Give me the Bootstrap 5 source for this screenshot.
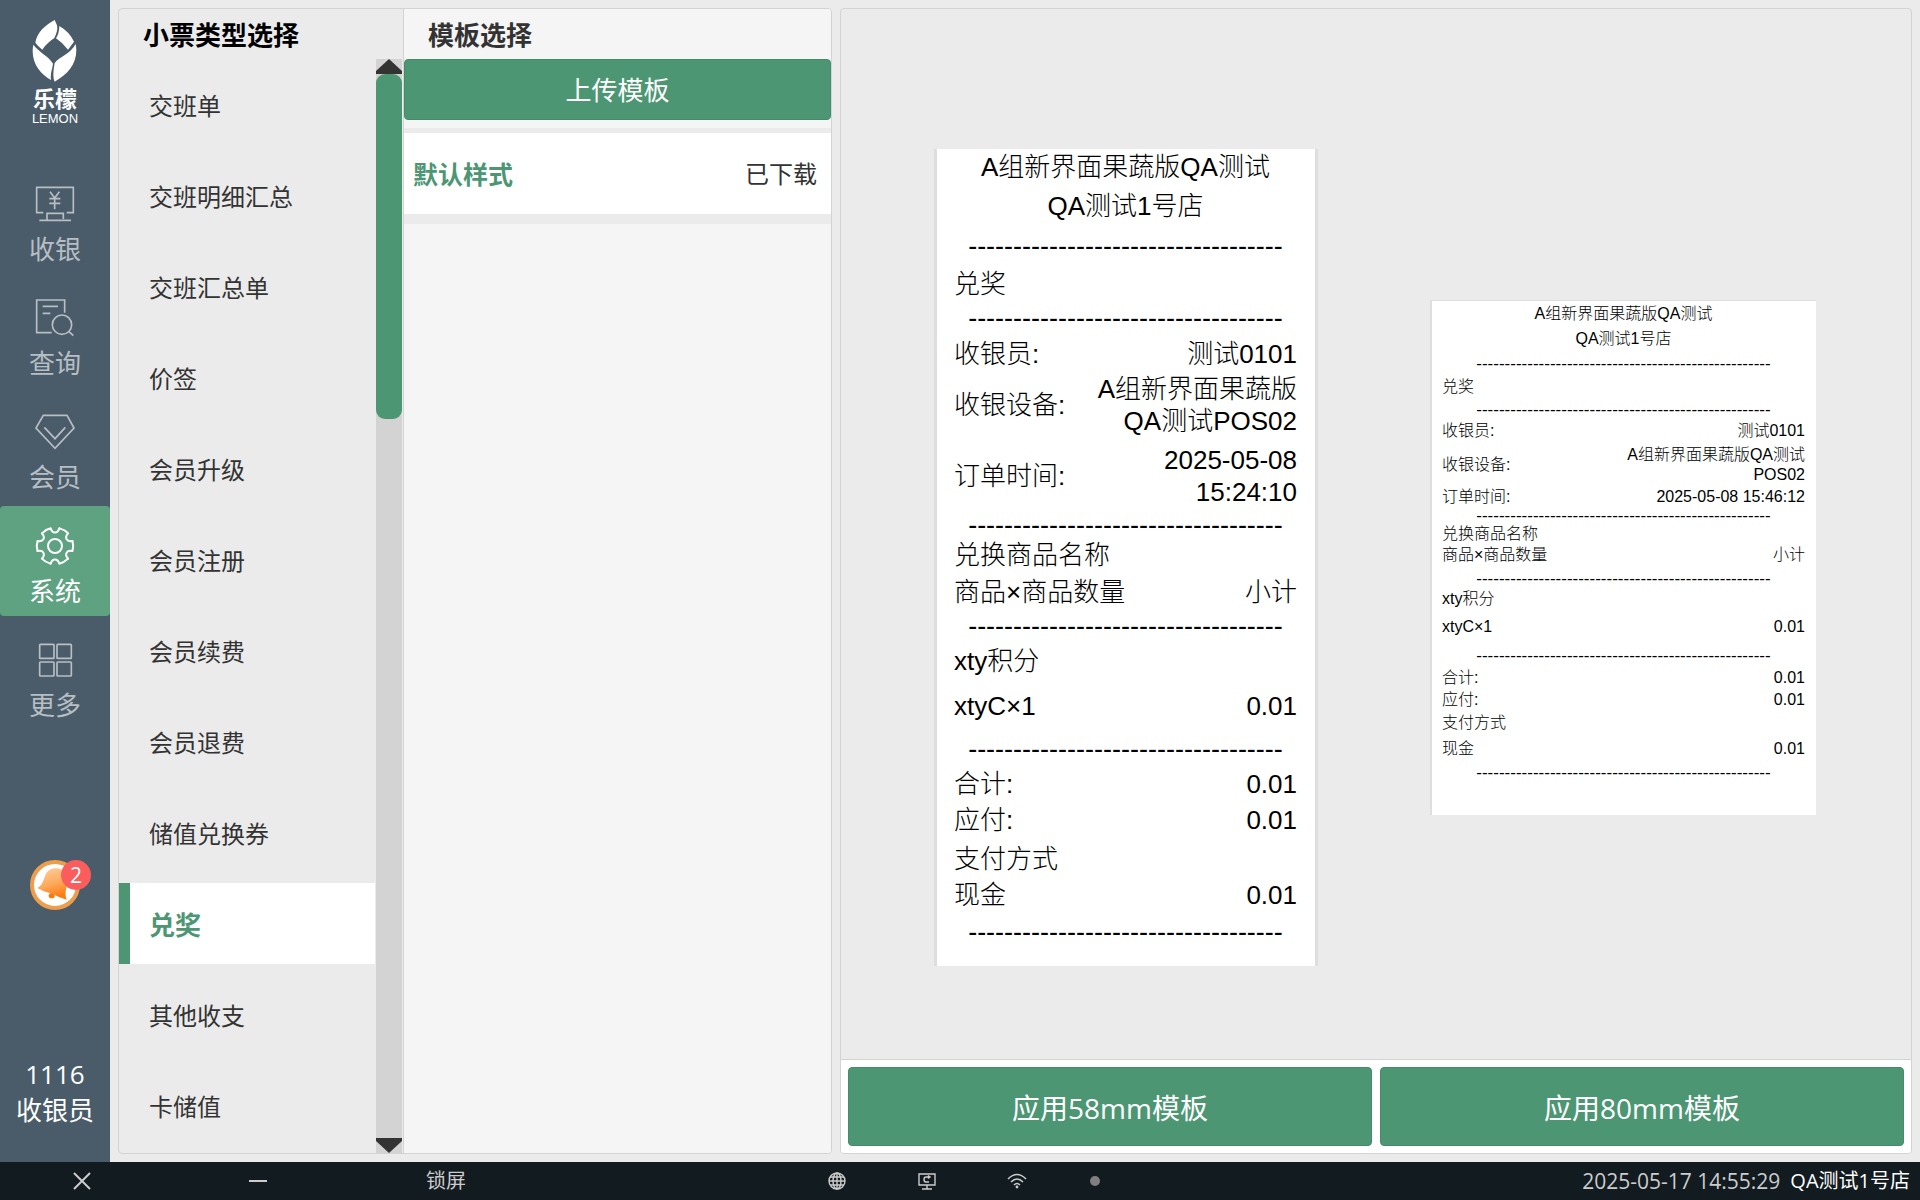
<!DOCTYPE html>
<html lang="zh-CN">
<head>
<meta charset="utf-8">
<meta name="viewport" content="width=device-width, initial-scale=1">
<title>小票模板</title>
<link href="https://cdn.jsdelivr.net/npm/bootstrap@5.3.0/dist/css/bootstrap.min.css" rel="stylesheet">
<style>
:root{--green:#4d9673;--slate:#4a5c69;--line:#d3d3d3;--ink:#333}
body{font-family:"Open Sans","Noto Sans CJK SC",sans-serif;background:#ebebeb;color:var(--ink);font-size:24px;line-height:36px}
button{font-family:inherit}
.side{width:110px;background:var(--slate);color:#fff;font-size:26px;padding:20px 0 34px}
.brand{height:144px}
.brand-cn{font-size:22px;font-weight:700;line-height:24px}
.brand-en{font-family:"Liberation Sans",sans-serif;font-size:13px;line-height:18px}
.side-nav{gap:4px}
.side-link{height:110px;padding-top:21px;gap:8px;color:#b7bec4;border-radius:4px;text-decoration:none}
.side-link.active{background:#5fa281;color:#fff}
.side-link svg{fill:none;stroke:currentColor;stroke-width:5}
.side-link.active svg{stroke-width:6}
.bell{margin-top:130px;width:50px;height:50px}
.bell-count{left:31px;top:0;width:30px;height:30px;border-radius:15px;background:#fb5d5d;font-size:21px;line-height:30px;color:#fff}
.workspace{padding:8px;gap:8px}
.panel{border:1px solid var(--line);border-radius:4px;overflow:hidden}
.picker{width:714px}
.types{width:285px;border-right:1px solid var(--line)}
.panel-title{font-size:26px;font-weight:700;line-height:52px;height:50px;margin:0;padding-left:24px}
.types .panel-title{color:#000}
.type-list{padding-top:5px;gap:10px}
.type-item{height:81px;padding:2px 0 0 30px;border:0;background:none;color:var(--ink);text-align:left;flex-shrink:0}
.type-item.active{background:#fff;border-left:11px solid var(--green);padding-left:19px;color:var(--green);font-weight:700;font-size:26px}
.scroll{width:26px;background:var(--line);margin:0 1px 0 1px}
.scroll button{border:0;background:none;padding:0;height:15px;line-height:0}
.thumb{height:345px;background:var(--green);border-radius:9px}
.templates{background:#f5f5f5}
.btn-green{background:var(--green);color:#fff;border:1px solid #448c69;border-radius:4px;padding:2px 0 0}
.btn-green:hover{background:#448c69;color:#fff}
.btn-upload{height:61px;font-size:26px}
.template-item{margin-top:8px;border:0 solid #ebebeb;border-width:5px 0 10px;background:#fff;height:96px;padding:1px 14px 0 9px}
.template-name{font-size:25px;font-weight:700;color:var(--green)}
.preview{padding:46px 2px 0 0;gap:112px}
.apply{background:#fff;border-top:1px solid var(--line);padding:7px;gap:8px}
.btn-apply{height:79px;font-size:28px}
.receipt{font-family:"Liberation Sans","Noto Sans CJK SC",sans-serif;font-weight:300;color:#000;background:#fff}
.receipt div{flex-shrink:0}
.r58{width:384px;height:817px;font-size:26px;line-height:32px;padding:0 18px 0 17px;border:0 solid #dedede;border-width:0 3px}
.r80{width:386px;height:515px;font-size:16px;line-height:20px;padding:0 11px 0 10px;border:0 solid #dedede;border-width:1px 0 0 2px}
.r58 .dashes{font-size:27px;padding-bottom:4px}
.r80 .dashes{font-size:17px}
.h-10{height:10px}.h-12{height:12px}.h-16{height:16px}.h-18{height:18px}.h-20{height:20px}.h-24{height:24px}.h-26{height:26px}.h-30{height:30px}.h-32{height:32px}.h-36{height:36px}.h-42{height:42px}.h-48{height:48px}.h-52{height:52px}.h-54{height:54px}.h-66{height:66px}.h-76{height:76px}
.status{height:38px;background:#111b20;color:#ccc;font-size:20px;line-height:38px;padding-right:10px}
.status button{border:0;background:none;padding:0;color:inherit;line-height:38px}
.status svg{fill:none;stroke:currentColor;display:block;margin:0 auto}
.w-first{width:164px}.w-wide{width:188px}.w-icon{width:90px}.w-dot{width:66px}
.status-icons{margin-left:252px}
.clock{font-size:21px;margin-right:10px}
</style>
<script src="https://cdn.jsdelivr.net/npm/bootstrap@5.3.0/dist/js/bootstrap.bundle.min.js"></script>
</head>
<body class="vh-100 d-flex flex-column overflow-hidden">
<div class="d-flex flex-grow-1 overflow-hidden">
  <aside class="side d-flex flex-column align-items-center flex-shrink-0">
    <div class="brand d-flex flex-column align-items-center">
      <svg width="46" height="62" viewBox="97 29 138 186" fill="#fff" class="mb-1" aria-hidden="true">
        <path d="M165 29C137 44 112 66 107 97Q115 108 128 118C138 102 152 92 164 83Q176 60 172 45Z"/>
        <path d="M179 47Q209 64 223 94L205 118Q190 98 169 84Q179 68 179 47Z"/>
        <path d="M101 103C118 125 148 139 160 160C158 177 151 190 154 209C119 190 91 151 101 103Z"/>
        <path d="M228 101C238 153 208 190 165 214Q157 199 165 158C179 139 211 132 228 101Z"/>
      </svg>
      <div class="brand-cn">乐檬</div>
      <div class="brand-en">LEMON</div>
    </div>
    <nav class="side-nav d-flex flex-column w-100">
      <a href="#" class="side-link d-flex flex-column align-items-center">
        <svg width="40" height="38" viewBox="105 554 120 114"><path d="M130 637H110V561H220V637H200M118 660H213M141 660V639H190V656M150 574L164 593L178 574M164 593V627M148 595H181M148 609H181"/></svg>收银</a>
      <a href="#" class="side-link d-flex flex-column align-items-center">
        <svg width="40" height="38" viewBox="105 896 120 114"><path d="M155 997H110V899H194V937M128 918H174M128 939H151M206 993L220 1006"/><circle cx="186" cy="973" r="29"/></svg>查询</a>
      <a href="#" class="side-link d-flex flex-column align-items-center">
        <svg width="40" height="38" viewBox="108 38 120 114"><path d="M133 45H204L225 83L168 144L111 83ZM136 81L168 115L199 81"/></svg>会员</a>
      <a href="#" class="side-link active d-flex flex-column align-items-center">
        <svg width="40" height="38" viewBox="-60 -57 120 114" stroke-linecap="round" stroke-linejoin="round">
          <defs><path id="tooth" d="M13 -53C8 -36 -8 -36 -13 -53Q-27 -50 -39 -38"/></defs>
          <use href="#tooth"/><use href="#tooth" transform="rotate(60)"/><use href="#tooth" transform="rotate(120)"/><use href="#tooth" transform="rotate(180)"/><use href="#tooth" transform="rotate(240)"/><use href="#tooth" transform="rotate(300)"/>
          <circle r="21"/></svg>系统</a>
      <a href="#" class="side-link d-flex flex-column align-items-center">
        <svg width="40" height="38" viewBox="106 724 120 114"><rect x="120" y="734" width="43" height="42" rx="2"/><rect x="172" y="734" width="43" height="42" rx="2"/><rect x="120" y="787" width="43" height="42" rx="2"/><rect x="172" y="787" width="43" height="42" rx="2"/></svg>更多</a>
    </nav>
    <div class="bell position-relative">
      <svg class="d-block" width="50" height="50" viewBox="90 180 150 150" aria-hidden="true">
        <defs><linearGradient id="bellFill" x1="0" y1="0" x2=".3" y2="1"><stop offset="0" stop-color="#ffd0a0"/><stop offset=".6" stop-color="#fda95a"/><stop offset="1" stop-color="#fb7d14"/></linearGradient></defs>
        <circle cx="165" cy="255" r="69" fill="#fff" stroke="#ee9d4c" stroke-width="12"/>
        <ellipse cx="155" cy="287" rx="9" ry="8" fill="#f9790c"/>
        <path fill="url(#bellFill)" d="M112 264C126 258 130 242 136 226C142 208 160 202 178 206C198 212 208 230 202 252C197 270 194 284 200 299Q180 294 158 282Q128 274 112 264Z"/>
      </svg>
      <span class="bell-count position-absolute text-center">2</span>
    </div>
    <div class="mt-auto text-center">1116<br>收银员</div>
  </aside>

  <main class="workspace d-flex flex-grow-1">
    <section class="picker panel d-flex flex-shrink-0">
      <div class="types d-flex flex-column flex-shrink-0">
        <h1 class="panel-title">小票类型选择</h1>
        <div class="d-flex flex-grow-1 overflow-hidden">
          <div class="type-list d-flex flex-column flex-grow-1 overflow-hidden">
            <button type="button" class="type-item">交班单</button>
            <button type="button" class="type-item">交班明细汇总</button>
            <button type="button" class="type-item">交班汇总单</button>
            <button type="button" class="type-item">价签</button>
            <button type="button" class="type-item">会员升级</button>
            <button type="button" class="type-item">会员注册</button>
            <button type="button" class="type-item">会员续费</button>
            <button type="button" class="type-item">会员退费</button>
            <button type="button" class="type-item">储值兑换券</button>
            <button type="button" class="type-item active">兑奖</button>
            <button type="button" class="type-item">其他收支</button>
            <button type="button" class="type-item">卡储值</button>
          </div>
          <div class="scroll d-flex flex-column flex-shrink-0">
            <button type="button" aria-label="向上"><svg width="26" height="15" viewBox="0 0 26 15"><path fill="#333" d="M13 0L26 12V15H0V12Z"/></svg></button>
            <div class="thumb"></div>
            <button type="button" class="mt-auto" aria-label="向下"><svg width="26" height="15" viewBox="0 0 26 15"><path fill="#333" d="M13 15L26 3V0H0V3Z"/></svg></button>
          </div>
        </div>
      </div>
      <div class="templates flex-grow-1">
        <h2 class="panel-title">模板选择</h2>
        <button type="button" class="btn btn-green btn-upload w-100 d-block">上传模板</button>
        <div class="template-item d-flex align-items-center justify-content-between">
          <span class="template-name">默认样式</span><span>已下载</span>
        </div>
      </div>
    </section>

    <section class="panel d-flex flex-column flex-grow-1">
      <div class="preview d-flex flex-grow-1 justify-content-center align-items-center">
        <article class="receipt r58 d-flex flex-column">
          <div class="h-36 d-flex align-items-center justify-content-center">A组新界面果蔬版QA测试</div>
          <div class="h-42 d-flex align-items-center justify-content-center">QA测试1号店</div>
          <div class="h-42 dashes d-flex align-items-center justify-content-center">-----------------------------------</div>
          <div class="h-30 d-flex align-items-center">兑奖</div>
          <div class="h-42 dashes d-flex align-items-center justify-content-center">-----------------------------------</div>
          <div class="h-26 d-flex align-items-center justify-content-between"><span>收银员:</span><span>测试0101</span></div>
          <div class="h-76 d-flex align-items-center justify-content-between"><span>收银设备:</span><span class="text-end">A组新界面果蔬版<br>QA测试POS02</span></div>
          <div class="h-66 d-flex align-items-center justify-content-between"><span>订单时间:</span><span class="text-end">2025-05-08<br>15:24:10</span></div>
          <div class="h-36 dashes d-flex align-items-center justify-content-center">-----------------------------------</div>
          <div class="h-20 d-flex align-items-center">兑换商品名称</div>
          <div class="h-54 d-flex align-items-center justify-content-between"><span>商品×商品数量</span><span>小计</span></div>
          <div class="h-18 dashes d-flex align-items-center justify-content-center">-----------------------------------</div>
          <div class="h-48 d-flex align-items-center">xty积分</div>
          <div class="h-42 d-flex align-items-center justify-content-between"><span>xtyC×1</span><span>0.01</span></div>
          <div class="h-48 dashes d-flex align-items-center justify-content-center">-----------------------------------</div>
          <div class="h-18 d-flex align-items-center justify-content-between"><span>合计:</span><span>0.01</span></div>
          <div class="h-54 d-flex align-items-center justify-content-between"><span>应付:</span><span>0.01</span></div>
          <div class="h-24 d-flex align-items-center">支付方式</div>
          <div class="h-48 d-flex align-items-center justify-content-between"><span>现金</span><span>0.01</span></div>
          <div class="h-30 dashes d-flex align-items-center justify-content-center">-----------------------------------</div>
        </article>
        <article class="receipt r80 d-flex flex-column">
          <div class="h-26 d-flex align-items-center justify-content-center">A组新界面果蔬版QA测试</div>
          <div class="h-24 d-flex align-items-center justify-content-center">QA测试1号店</div>
          <div class="h-26 dashes d-flex align-items-center justify-content-center">----------------------------------------------------</div>
          <div class="h-20 d-flex align-items-center">兑奖</div>
          <div class="h-26 dashes d-flex align-items-center justify-content-center">----------------------------------------------------</div>
          <div class="h-16 d-flex align-items-center justify-content-between"><span>收银员:</span><span>测试0101</span></div>
          <div class="h-52 d-flex align-items-center justify-content-between"><span>收银设备:</span><span class="text-end">A组新界面果蔬版QA测试<br>POS02</span></div>
          <div class="h-12 d-flex align-items-center justify-content-between"><span>订单时间:</span><span>2025-05-08 15:46:12</span></div>
          <div class="h-26 dashes d-flex align-items-center justify-content-center">----------------------------------------------------</div>
          <div class="h-10 d-flex align-items-center">兑换商品名称</div>
          <div class="h-32 d-flex align-items-center justify-content-between"><span>商品×商品数量</span><span>小计</span></div>
          <div class="h-16 dashes d-flex align-items-center justify-content-center">----------------------------------------------------</div>
          <div class="h-24 d-flex align-items-center">xty积分</div>
          <div class="h-32 d-flex align-items-center justify-content-between"><span>xtyC×1</span><span>0.01</span></div>
          <div class="h-26 dashes d-flex align-items-center justify-content-center">----------------------------------------------------</div>
          <div class="h-18 d-flex align-items-center justify-content-between"><span>合计:</span><span>0.01</span></div>
          <div class="h-26 d-flex align-items-center justify-content-between"><span>应付:</span><span>0.01</span></div>
          <div class="h-20 d-flex align-items-center">支付方式</div>
          <div class="h-32 d-flex align-items-center justify-content-between"><span>现金</span><span>0.01</span></div>
          <div class="h-16 dashes d-flex align-items-center justify-content-center">----------------------------------------------------</div>
        </article>
      </div>
      <div class="apply d-flex">
        <button type="button" class="btn btn-green btn-apply flex-fill">应用58mm模板</button>
        <button type="button" class="btn btn-green btn-apply flex-fill">应用80mm模板</button>
      </div>
    </section>
  </main>
</div>

<footer class="status d-flex align-items-center flex-shrink-0">
  <button type="button" class="w-first" aria-label="关闭"><svg width="18" height="18" viewBox="0 0 18 18" stroke-width="2"><path d="M1 1L17 17M17 1L1 17"/></svg></button>
  <button type="button" class="w-wide" aria-label="最小化"><svg width="18" height="18" viewBox="0 0 18 18" stroke-width="2"><path d="M0 9H18"/></svg></button>
  <button type="button" class="w-wide">锁屏</button>
  <div class="status-icons d-flex align-items-center">
    <span class="w-icon"><svg width="18" height="18" viewBox="0 0 18 18" stroke-width="1.4"><circle cx="9" cy="9" r="8"/><ellipse cx="9" cy="9" rx="4" ry="8"/><path d="M9 1V17M1 9H17M2 5H16M2 13H16"/></svg></span>
    <span class="w-icon"><svg width="18" height="18" viewBox="0 0 18 18" stroke-width="1.4"><path d="M1 2H17V13H1ZM9 13V17M4 17H14M12 5H8Q6 5 6 7.5Q6 10 8 10H11M10 3.5L12 5L10 6.5"/></svg></span>
    <span class="w-icon"><svg width="20" height="16" viewBox="0 0 20 16" stroke-width="1.6"><path d="M1 6Q10 -3 19 6M4 9Q10 3 16 9M7 12Q10 9 13 12"/><circle cx="10" cy="14" r="1.4" fill="currentColor" stroke="none"/></svg></span>
    <span class="w-dot"><svg width="10" height="10" viewBox="0 0 10 10"><circle cx="5" cy="5" r="5" fill="#808080" stroke="none"/></svg></span>
  </div>
  <span class="clock ms-auto">2025-05-17 14:55:29</span>
  <span class="text-white">QA测试1号店</span>
</footer>
</body>
</html>
